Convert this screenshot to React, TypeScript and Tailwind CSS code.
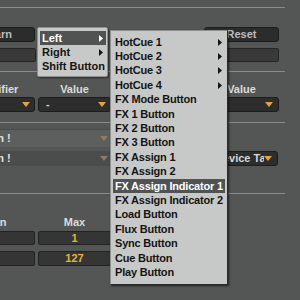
import React from "react";

type Item = { label: string; sub?: boolean; active?: boolean };

const sideItems: Item[] = [
  { label: "Left", sub: true, active: true },
  { label: "Right", sub: true },
  { label: "Shift Button" },
];

const mainItems: Item[] = [
  { label: "HotCue 1", sub: true },
  { label: "HotCue 2", sub: true },
  { label: "HotCue 3", sub: true },
  { label: "HotCue 4", sub: true },
  { label: "FX Mode Button" },
  { label: "FX 1 Button" },
  { label: "FX 2 Button" },
  { label: "FX 3 Button" },
  { label: "FX Assign 1" },
  { label: "FX Assign 2" },
  { label: "FX Assign Indicator 1", active: true },
  { label: "FX Assign Indicator 2" },
  { label: "Load Button" },
  { label: "Flux Button" },
  { label: "Sync Button" },
  { label: "Cue Button" },
  { label: "Play Button" },
];

const Caret = ({ color }: { color: string }) => (
  <svg width="8" height="5" viewBox="0 0 8 5" className="shrink-0">
    <polygon points="0,0 8,0 4,5" fill={color} />
  </svg>
);

const SubArrow = ({ color }: { color: string }) => (
  <svg width="4" height="7" viewBox="0 0 4 7" className="shrink-0">
    <polygon points="0,0 4,3.5 0,7" fill={color} />
  </svg>
);

const MenuRow = ({ item }: { item: Item }) => (
  <div
    className={`h-[14.4px] flex items-center justify-between pl-[2px] pr-[3px] whitespace-nowrap ${
      item.active ? "bg-[#505352] text-white" : "text-[#141414]"
    }`}
  >
    <span>{item.label}</span>
    {item.sub && <SubArrow color={item.active ? "#ffffff" : "#141414"} />}
  </div>
);

const Line = () => <div className="h-px w-[326px] bg-[#8a8b8a]" />;

const App = () => {
  return (
    <div className="w-[300px] h-[300px] bg-[#545655] relative overflow-hidden select-none font-['Liberation_Sans',Arial,sans-serif] font-bold text-[11px] leading-none">
      {/* panel behind the menus, starts off the left edge */}
      <div className="ml-[-41px] w-[328px] pt-[7px]">
        <Line />

        {/* buttons */}
        <div className="mt-[19px] flex h-[15px]">
          <div className="w-[76px] rounded-[3px] bg-[#2b2c2b] border border-[#1c1c1c] flex items-center justify-center text-[#bcbcbc]">
            Learn
          </div>
          <div className="ml-[169px] w-[75px] rounded-[3px] bg-[#2b2c2b] border border-[#1c1c1c] flex items-center justify-center text-[#bcbcbc]">
            Reset
          </div>
        </div>
        <div className="mt-[6px] flex h-[14px]">
          <div className="w-[77px] rounded-[2px] bg-[#383938] border border-[#252525]" />
          <div className="ml-[168px] w-[75px] rounded-[2px] bg-[#383938] border border-[#252525]" />
        </div>

        <div className="mt-[9px]">
          <Line />
        </div>

        {/* modifier / value */}
        <div className="mt-[12px] flex h-[11px] text-[#dcdcdc]">
          <div className="w-[76px] text-center">Modifier</div>
          <div className="ml-[3px] w-[73px] text-center">Value</div>
          <div className="ml-[93px] w-[75px] text-center">Value</div>
        </div>
        <div className="mt-[2px] flex h-[15px]">
          <div className="w-[76px] rounded-[3px] bg-[#2c2d2c] border border-[#1c1c1c] flex items-center justify-end pr-[4px]">
            <Caret color="#e9a23a" />
          </div>
          <div className="ml-[3px] w-[73px] rounded-[3px] bg-[#2c2d2c] border border-[#1c1c1c] flex items-center justify-between pl-[7px] pr-[4px] text-[#d0d0d0]">
            <span>-</span>
            <Caret color="#e9a23a" />
          </div>
          <div className="ml-[93px] w-[75px] rounded-[3px] bg-[#2c2d2c] border border-[#1c1c1c] flex items-center justify-end pr-[5px]">
            <Caret color="#e9a23a" />
          </div>
        </div>

        <div className="mt-[10px]">
          <Line />
        </div>

        {/* assignment rows */}
        <div className="mt-[6px] h-[18px] w-[153px] bg-[#5d5f5e] border-t border-[#4a4b4a] flex items-center justify-between pr-[4px] text-[#e2e2e2]">
          <span className="ml-[-4px]">Selection !</span>
          <Caret color="#8e7a64" />
        </div>
        <div className="mt-[4px] flex h-[15px]">
          <div className="w-[153px] bg-[#4b4d4c] flex items-center justify-between pr-[4px] text-[#e2e2e2]">
            <span className="ml-[-4px]">Selection !</span>
            <Caret color="#8e7a64" />
          </div>
          <div className="ml-[92px] w-[74px] rounded-[3px] bg-[#2c2d2c] border border-[#1c1c1c] flex items-center justify-between pl-[10px] pr-[5px] text-[#d8d8d8]">
            <span className="w-[50px] overflow-hidden whitespace-nowrap">Device Target</span>
            <Caret color="#e9a23a" />
          </div>
        </div>

        <div className="mt-[27px]">
          <Line />
        </div>

        {/* min / max */}
        <div className="mt-[23px] flex h-[11px] text-[#dcdcdc]">
          <div className="w-[76px] text-center">Min</div>
          <div className="ml-[3px] w-[73px] text-center">Max</div>
        </div>
        <div className="mt-[3px] flex h-[14px]">
          <div className="w-[76px] rounded-[2px] bg-[#343534] border border-[#222]" />
          <div className="ml-[3px] w-[73px] rounded-[2px] bg-[#343534] border border-[#222] flex items-center justify-center text-[#e8b337]">
            1
          </div>
        </div>
        <div className="mt-[6px] flex h-[15px]">
          <div className="w-[76px] rounded-[2px] bg-[#343534] border border-[#222]" />
          <div className="ml-[3px] w-[73px] rounded-[2px] bg-[#343534] border border-[#222] flex items-center justify-center text-[#e8b337]">
            127
          </div>
        </div>
      </div>

      {/* first context menu */}
      <div className="absolute left-[37px] top-[27px] w-[71px] h-[50px] bg-[#c7c9c8] rounded-[2px] border border-[#8e908f] shadow-[1px_1px_2px_rgba(0,0,0,0.5)] pt-[3px] pl-[2px] pr-[1px]">
        {sideItems.map((it) => (
          <MenuRow key={it.label} item={it} />
        ))}
      </div>

      {/* submenu */}
      <div className="absolute left-[110px] top-[30px] w-[118px] h-[255px] bg-[#c7c9c8] border border-[#8e908f] border-r-[#2a2a2a] border-b-[#2a2a2a] shadow-[1px_1px_2px_rgba(0,0,0,0.6)] pt-[4px] px-[2px] tracking-[-0.2px]">
        {mainItems.map((it) => (
          <MenuRow key={it.label} item={it} />
        ))}
      </div>
    </div>
  );
};

export default App;
